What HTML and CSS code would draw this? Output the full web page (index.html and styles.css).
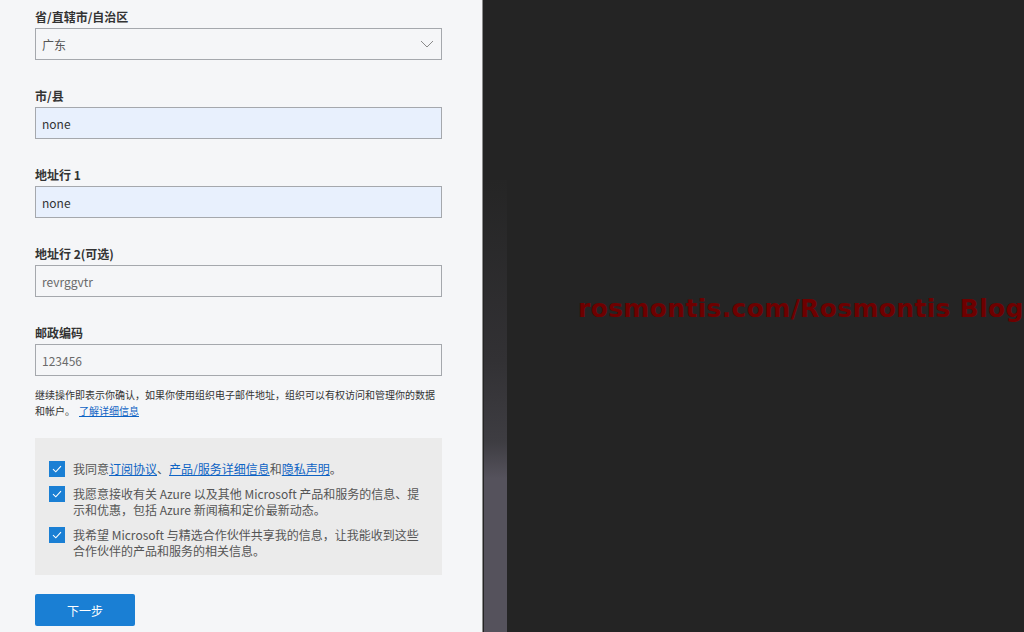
FILE: index.html
```html
<!DOCTYPE html>
<html lang="zh-CN">
<head>
<meta charset="utf-8">
<title>地址</title>
<link rel="stylesheet" href="styles.css">
</head>
<body>
<div class="page">
  <div class="form-panel">
    <div class="field">
      <div class="label">省/直辖市/自治区</div>
      <div class="input select">
        <span>广东</span>
        <svg class="chev" width="14" height="8" viewBox="0 0 14 8"><path d="M1 1 L7 7 L13 1" fill="none" stroke="#8a8a8a" stroke-width="1"/></svg>
      </div>
    </div>
    <div class="field">
      <div class="label">市/县</div>
      <div class="input filled">none</div>
    </div>
    <div class="field">
      <div class="label">地址行 1</div>
      <div class="input filled">none</div>
    </div>
    <div class="field">
      <div class="label">地址行 2(可选)</div>
      <div class="input plain">revrggvtr</div>
    </div>
    <div class="field last">
      <div class="label">邮政编码</div>
      <div class="input plain">123456</div>
    </div>
    <div class="notice">
      <div class="notice-line">继续操作即表示你确认，如果你使用组织电子邮件地址，组织可以有权访问和管理你的数据</div>
      <div class="notice-line row"><span>和帐户。</span><a class="link" href="#">了解详细信息</a></div>
    </div>
    <div class="consent">
      <div class="check-row">
        <span class="box"><svg width="16" height="16" viewBox="0 0 16 16"><path d="M4 8.2 L6.8 10.8 L12 5.2" fill="none" stroke="#fff" stroke-width="1.1"/></svg></span>
        <span class="ctext">我同意<a class="link" href="#">订阅协议</a>、<a class="link" href="#">产品/服务详细信息</a>和<a class="link" href="#">隐私声明</a>。</span>
      </div>
      <div class="check-row">
        <span class="box"><svg width="16" height="16" viewBox="0 0 16 16"><path d="M4 8.2 L6.8 10.8 L12 5.2" fill="none" stroke="#fff" stroke-width="1.1"/></svg></span>
        <span class="ctext">我愿意接收有关 Azure 以及其他 Microsoft 产品和服务的信息、提示和优惠，包括 Azure 新闻稿和定价最新动态。</span>
      </div>
      <div class="check-row">
        <span class="box"><svg width="16" height="16" viewBox="0 0 16 16"><path d="M4 8.2 L6.8 10.8 L12 5.2" fill="none" stroke="#fff" stroke-width="1.1"/></svg></span>
        <span class="ctext">我希望 Microsoft 与精选合作伙伴共享我的信息，让我能收到这些合作伙伴的产品和服务的相关信息。</span>
      </div>
    </div>
    <button class="next">下一步</button>
  </div>
  <div class="dark-panel">
    <div class="strip"></div>
    <div class="watermark">rosmontis.com/Rosmontis Blog</div>
  </div>
</div>
</body>
</html>
```
FILE: styles.css
```css
html, body {
  margin: 0;
  padding: 0;
  height: 100%;
  overflow: hidden;
}
body {
  font-family: "Noto Sans", "Noto Sans CJK SC", sans-serif;
  background: #242424;
}
.page {
  display: flex;
  width: 1024px;
  height: 632px;
}
.form-panel {
  width: 447px;
  padding: 7px 0 0 35px;
  background: #f5f6f8;
  border-right: 1px solid #8c8c8c;
  box-sizing: content-box;
  flex: none;
}
.field {
  width: 407px;
  margin-bottom: 26px;
}
.field.last {
  margin-bottom: 11px;
}
.label {
  height: 20px;
  line-height: 20px;
  font-size: 12px;
  font-weight: 700;
  color: #333;
  margin-bottom: 1px;
  font-family: "Noto Sans CJK SC", sans-serif;
}
.input {
  height: 32px;
  box-sizing: border-box;
  border: 1px solid #a5a8ad;
  padding: 0 6px;
  display: flex;
  align-items: center;
  font-size: 12px;
  color: #444;
  font-family: "Noto Sans CJK SC", sans-serif;
}
.select {
  justify-content: space-between;
  background: #f5f6f8;
  color: #555;
  padding-right: 7px;
}
.filled {
  background: #e8f0fd;
  color: #333;
}
.plain {
  background: #f5f6f8;
  color: #6a6a6a;
}
.notice {
  width: 407px;
  font-size: 10px;
  line-height: 16px;
  color: #333;
  font-family: "Noto Sans CJK SC", sans-serif;
}
.notice-line {
  white-space: nowrap;
  height: 16px;
}
.notice-line.row {
  display: flex;
  gap: 4px;
}
.link {
  color: #0e63c4;
  text-decoration: underline;
}
.consent {
  width: 407px;
  box-sizing: border-box;
  margin-top: 19px;
  background: #ebebeb;
  padding: 23px 22px 16px 14px;
  display: flex;
  flex-direction: column;
  gap: 9px;
}
.check-row {
  display: flex;
  align-items: flex-start;
  gap: 8px;
}
.box {
  flex: none;
  width: 16px;
  height: 16px;
  background: #1a7fd4;
  display: flex;
}
.ctext {
  font-size: 12px;
  line-height: 16px;
  color: #555;
  font-family: "Noto Sans CJK SC", sans-serif;
}
.ctext .link {
  color: #0e63c4;
}
.next {
  margin-top: 19px;
  width: 100px;
  height: 32px;
  border: none;
  border-radius: 2px;
  background: #1a7fd4;
  color: #fff;
  font-size: 12px;
  font-family: "Noto Sans CJK SC", sans-serif;
  cursor: pointer;
}
.dark-panel {
  flex: 1;
  display: flex;
  background: #242424;
  overflow: hidden;
}
.strip {
  flex: none;
  width: 23px;
  margin: 180px 0 0 1px;
  background: linear-gradient(to bottom, #252525 0%, #323134 40%, #3e3d42 58%, #55525c 66%, #55525c 100%);
}
.watermark {
  margin: 295px 0 0 71px;
  font-family: "DejaVu Sans", sans-serif;
  font-weight: 700;
  font-size: 25px;
  line-height: 28px;
  letter-spacing: 0.33px;
  color: #6e0000;
  white-space: nowrap;
  height: 28px;
}
```
